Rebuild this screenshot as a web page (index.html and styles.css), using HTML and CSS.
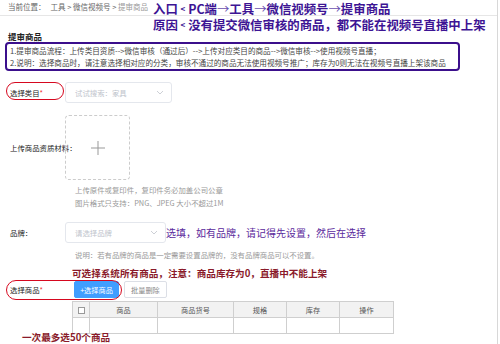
FILE: index.html
```html
<!DOCTYPE html>
<html lang="zh-CN">
<head>
  <meta charset="UTF-8" />
  <title>提审商品</title>
  <link rel="stylesheet" href="styles.css">
</head>
<body>

<div class="page">
  <div class="crumb">当前位置：&nbsp;&nbsp;&nbsp;工具 &gt; 微信视频号 &gt; <span class="crumb-cur">提审商品</span></div>

  <div class="title">提审商品</div>
  <div class="notice">
    <p>1.提审商品流程：上传类目资质--&gt;微信审核（通过后）--&gt;上传对应类目的商品--&gt;微信审核--&gt;使用视频号直播；</p>
    <p>2.说明：选择商品时，请注意选择相对应的分类，审核不通过的商品无法使用视频号推广；库存为0则无法在视频号直播上架该商品</p>
  </div>

  <!-- 选择类目 -->
  <div class="row row-cat">
    <div class="label">选择类目<i>*</i></div>
    <div class="select select-cat">
      <span>试试搜索：家具</span>
      <svg width="8" height="5" viewBox="0 0 8 5"><path d="M1 1l3 3 3-3" fill="none" stroke="#c0c4cc" stroke-width="0.8"/></svg>
    </div>
  </div>

  <!-- 上传资质 -->
  <div class="row row-upload">
    <div class="label">上传商品资质材料：</div>
    <div class="upload">
      <svg width="14" height="14" viewBox="0 0 14 14"><path d="M7 0v14M0 7h14" stroke="#999" stroke-width="1"/></svg>
    </div>
  </div>
  <div class="tip tip-upload">
    <p>上传原件或复印件，复印件务必加盖公司公章</p>
    <p>图片格式只支持：PNG、JPEG 大小不超过1M</p>
  </div>

  <!-- 品牌 -->
  <div class="row row-brand">
    <div class="label">品牌：</div>
    <div class="select select-brand">
      <span>请选择品牌</span>
      <svg width="8" height="5" viewBox="0 0 8 5"><path d="M1 1l3 3 3-3" fill="none" stroke="#c0c4cc" stroke-width="0.8"/></svg>
    </div>
    <div class="note-brand">选填，如有品牌，请记得先设置，然后在选择</div>
  </div>
  <div class="tip tip-brand">说明：若有品牌的商品是一定需要设置品牌的，没有品牌商品可以不设置。</div>

  <!-- 选择商品 -->
  <div class="note-goods">可选择系统所有商品，注意：商品库存为0，直播中不能上架</div>
  <div class="row row-goods">
    <div class="label">选择商品<i>*</i></div>
    <button class="btn btn-primary">+选择商品</button>
    <button class="btn">批量删除</button>
  </div>
  <table class="goods">
    <tr>
      <th class="col-check"><span class="check"></span></th>
      <th class="col-name">商品</th>
      <th class="col-sn">商品货号</th>
      <th class="col-spec">规格</th>
      <th class="col-stock">库存</th>
      <th>操作</th>
    </tr>
    <tr>
      <td></td><td></td><td></td><td></td><td></td><td></td>
    </tr>
  </table>
  <div class="note-max">一次最多选50个商品</div>

  <!-- 标注 -->
  <div class="callout">
    <p>入口 <small>&lt;</small> PC端<span class="arr">→</span>工具<span class="arr">→</span>微信视频号<span class="arr">→</span>提审商品</p>
    <p>原因 <small>&lt;</small> 没有提交微信审核的商品，都不能在视频号直播中上架</p>
  </div>
  <div class="ring ring-cat"></div>
  <div class="ring ring-goods"></div>
</div>

</body>
</html>
```

FILE: styles.css
```css
* {
  box-sizing: border-box;
}
body {
  margin: 0;
  background-color: #fff;
  font-family: "Noto Sans CJK SC", "Noto Sans", sans-serif;
  color: #333;
}
p {
  margin: 0;
}
.page {
  position: relative;
  width: 498px;
  height: 344px;
  border-right: 1px solid #d8d8d8;
  overflow: hidden;
}
.crumb {
  height: 16px;
  padding-left: 8px;
  font-size: 7.5px;
  line-height: 14px;
  color: #666;
  border-bottom: 1px solid #e6e6e6;
}
.crumb-cur {
  color: #999;
}
.title {
  margin: 14px 0 0 8px;
  font-size: 8.5px;
  font-weight: bold;
  line-height: 12px;
  color: #222;
}
.notice {
  width: 455px;
  height: 29px;
  margin-left: 5px;
  padding: 1px 0 0 3px;
  border: 2px solid #3b0f8c;
  border-radius: 4px;
  font-size: 7.6px;
  line-height: 12px;
  color: #444;
  white-space: nowrap;
}
.row {
  display: flex;
  align-items: center;
}
.label {
  width: 65px;
  padding-left: 10px;
  font-size: 7.4px;
  color: #222;
  white-space: nowrap;
}
.label i {
  font-style: normal;
  color: #e33;
}
.select {
  display: flex;
  justify-content: space-between;
  align-items: center;
  height: 21px;
  padding: 0 7px 0 9px;
  border: 1px solid #e4e7ed;
  border-radius: 3px;
  font-size: 7.4px;
  color: #c0c4cc;
}
.row-cat {
  margin-top: 11px;
}
.select-cat {
  width: 107px;
}
.row-upload {
  margin-top: 12px;
}
.upload {
  display: flex;
  justify-content: center;
  align-items: center;
  width: 65px;
  height: 65px;
  border: 1px dashed #ccc;
  border-radius: 4px;
}
.tip {
  margin-left: 75px;
  font-size: 7.4px;
  color: #999;
}
.tip-upload {
  margin-top: 3px;
  line-height: 13px;
}
.row-brand {
  margin-top: 13px;
}
.select-brand {
  width: 101px;
}
.note-brand {
  font-size: 10px;
  color: #5b2a9c;
}
.tip-brand {
  margin-top: 6px;
  line-height: 12px;
}
.note-goods {
  margin: 6px 0 0 72px;
  font-size: 9.6px;
  font-weight: bold;
  line-height: 12px;
  color: #8a1a2a;
}
.row-goods {
  margin-top: 2px;
}
.row-goods .label {
  width: 74px;
}
.btn {
  height: 17px;
  padding: 0 6px;
  border: 1px solid #dcdfe6;
  border-radius: 2px;
  background-color: #fff;
  font-family: inherit;
  font-size: 7.2px;
  color: #888;
  white-space: nowrap;
}
.btn-primary {
  width: 45px;
  padding: 0;
  margin-right: 5px;
  border-color: #409eff;
  background-color: #409eff;
  color: #fff;
}
.goods {
  width: 322px;
  margin: 3px 0 0 72px;
  border-collapse: collapse;
  font-size: 7.2px;
  color: #555;
}
.goods tr {
  height: 16px;
}
.goods th,
.goods td {
  height: 16px;
  padding: 0;
  border: 1px solid #cfcfcf;
  font-weight: normal;
  text-align: center;
}
.goods th {
  background-color: #f2f2f2;
}
.col-check {
  width: 17px;
}
.col-name {
  width: 68px;
}
.col-sn {
  width: 76px;
}
.col-spec,
.col-stock {
  width: 53px;
}
.check {
  display: inline-block;
  width: 7px;
  height: 7px;
  border: 1px solid #999;
  background-color: #fff;
  vertical-align: middle;
}
.note-max {
  margin: -1px 0 0 22px;
  font-size: 9.6px;
  font-weight: bold;
  line-height: 9px;
  color: #8a1a2a;
}

/* 标注层 */
.callout {
  position: absolute;
  top: 1px;
  left: 153px;
  font-size: 12.4px;
  font-weight: bold;
  line-height: 15px;
  color: #3d1494;
  white-space: nowrap;
}
.callout small {
  font-size: 8px;
  vertical-align: 2px;
}
.callout .arr {
  font-weight: normal;
  color: #6a4fb0;
}
.ring {
  position: absolute;
  border: 1.5px solid #d6081f;
  border-radius: 10px;
}
.ring-cat {
  top: 82px;
  left: 6px;
  width: 58px;
  height: 18px;
}
.ring-goods {
  top: 280px;
  left: 6px;
  width: 116px;
  height: 20px;
}
```
